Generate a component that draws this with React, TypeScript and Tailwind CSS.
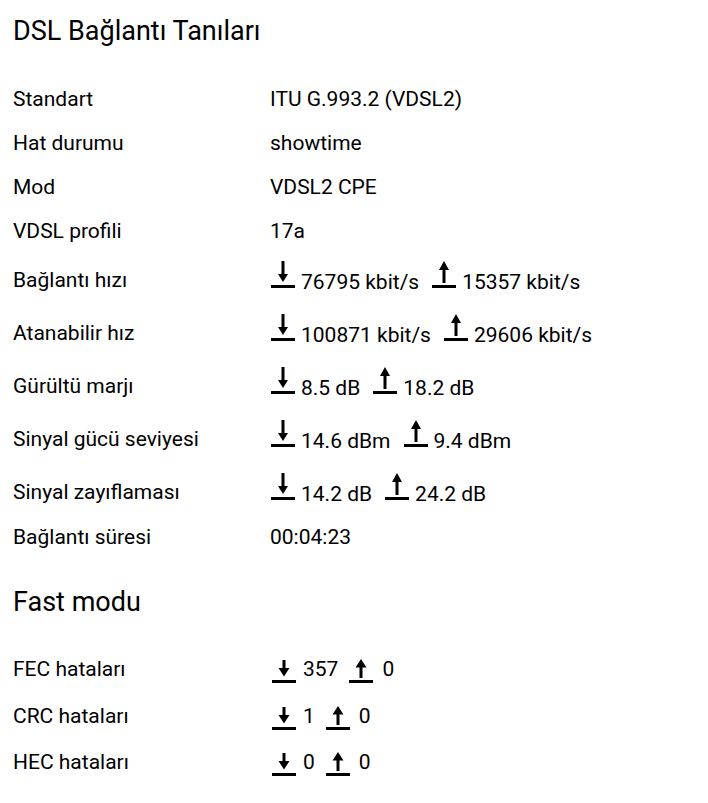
const plain: [string, string][] = [
  ["Standart", "ITU G.993.2 (VDSL2)"],
  ["Hat durumu", "showtime"],
  ["Mod", "VDSL2 CPE"],
  ["VDSL profili", "17a"],
];

const rates: [string, string, string][] = [
  ["Bağlantı hızı", "76795 kbit/s", "15357 kbit/s"],
  ["Atanabilir hız", "100871 kbit/s", "29606 kbit/s"],
  ["Gürültü marjı", "8.5 dB", "18.2 dB"],
  ["Sinyal gücü seviyesi", "14.6 dBm", "9.4 dBm"],
  ["Sinyal zayıflaması", "14.2 dB", "24.2 dB"],
];

const errors: [string, string, string][] = [
  ["FEC hataları", "357", "0"],
  ["CRC hataları", "1", "0"],
  ["HEC hataları", "0", "0"],
];

const Down = () => (
  <svg width="24" height="27" viewBox="0 0 24 27" className="shrink-0 mb-[8px]">
    <path d="M10.5 0h3v13h3.5L12 21 7 13h3.5z M0 24h24v3H0z" fill="currentColor" />
  </svg>
);

const Up = () => (
  <svg width="24" height="27" viewBox="0 0 24 27" className="shrink-0 mb-[8px]">
    <path d="M12 0l5 9h-3.5v13h-3V9H7z M0 24h24v3H0z" fill="currentColor" />
  </svg>
);

const DownSmall = () => (
  <svg width="24" height="24" viewBox="0 0 24 24" className="shrink-0">
    <path d="M10.5 1h3v8h4L12 17.5 6.5 9h4z M0 21h24v3H0z" fill="currentColor" />
  </svg>
);

const UpSmall = () => (
  <svg width="24" height="24" viewBox="0 0 24 24" className="shrink-0">
    <path d="M12 0l5.5 8.5h-4V19h-3V8.5h-4z M0 21h24v3H0z" fill="currentColor" />
  </svg>
);

export default function App() {
  return (
    <div className="w-full min-h-screen bg-white text-black font-['Roboto',sans-serif] pl-[13px] pt-[15px]">
      <h1 className="text-[27px] leading-[32px] font-normal">DSL Bağlantı Tanıları</h1>

      <div className="mt-[30px] text-[21px] leading-[28px]">
        {plain.map(([label, value]) => (
          <div key={label} className="grid grid-cols-[257px_1fr] h-[44px] items-center">
            <span>{label}</span>
            <span>{value}</span>
          </div>
        ))}
        {rates.map(([label, down, up]) => (
          <div key={label} className="grid grid-cols-[257px_1fr] h-[53px] items-center">
            <span>{label}</span>
            <div className="flex items-end h-full pb-[10px] pl-[1px]">
              <Down />
              <span className="ml-[6px]">{down}</span>
              <span className="ml-[13px] flex items-end">
                <Up />
              </span>
              <span className="ml-[6px]">{up}</span>
            </div>
          </div>
        ))}
        <div className="grid grid-cols-[257px_1fr] h-[38px] items-center">
          <span>Bağlantı süresi</span>
          <span>00:04:23</span>
        </div>
      </div>

      <h2 className="mt-[30px] text-[27px] leading-[32px] font-normal">Fast modu</h2>

      <div className="mt-[28px] text-[21px] leading-[28px]">
        {errors.map(([label, down, up]) => (
          <div key={label} className="grid grid-cols-[257px_1fr] h-[46.5px] items-center">
            <span>{label}</span>
            <div className="flex items-end pl-[2px]">
              <DownSmall />
              <span className="ml-[7px]">{down}</span>
              <span className="ml-[11px] flex items-end">
                <UpSmall />
              </span>
              <span className="ml-[9px]">{up}</span>
            </div>
          </div>
        ))}
      </div>
    </div>
  );
}
